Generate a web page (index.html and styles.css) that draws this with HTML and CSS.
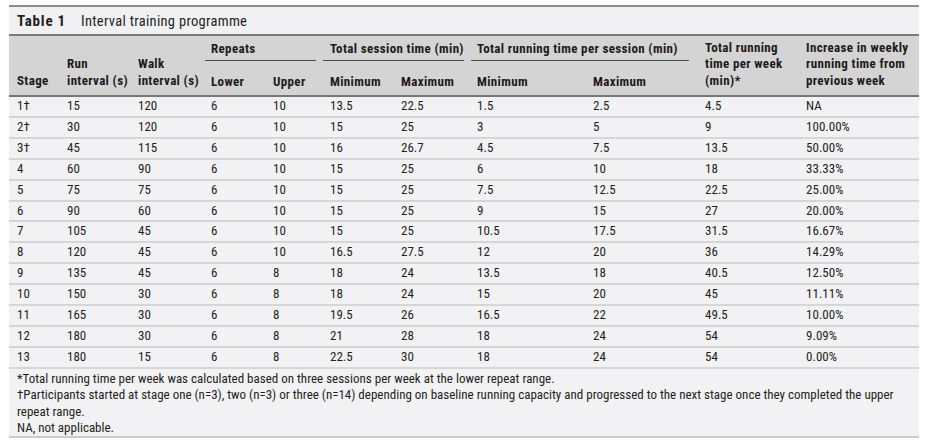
FILE: index.html
```html
<!DOCTYPE html>
<html>
<head>
<meta charset="utf-8">
<link rel="stylesheet" href="styles.css">
</head>
<body>
<div class="tbl">
  <div class="caption"><span class="cap-num">Table 1</span><span class="cap-text">Interval training programme</span></div>
  <table class="data">
    <colgroup>
      <col class="c-stage"><col class="c-run"><col class="c-walk"><col class="c-lower"><col class="c-upper">
      <col class="c-smin"><col class="c-smax"><col class="c-rmin"><col class="c-rmax"><col class="c-week"><col class="c-inc">
    </colgroup>
    <thead>
      <tr class="h1">
        <th rowspan="2" class="rs">Stage</th>
        <th rowspan="2" class="rs">Run<br>interval (s)</th>
        <th rowspan="2" class="rs">Walk<br>interval (s)</th>
        <th colspan="2" class="grp"><div class="gl g-rep">Repeats</div></th>
        <th colspan="2" class="grp"><div class="gl g-ses">Total session time (min)</div></th>
        <th colspan="2" class="grp"><div class="gl g-run">Total running time per session (min)</div></th>
        <th rowspan="2" class="rs">Total running<br>time per week<br>(min)*</th>
        <th rowspan="2" class="rs">Increase in weekly<br>running time from<br>previous week</th>
      </tr>
      <tr class="h2">
        <th>Lower</th><th>Upper</th><th>Minimum</th><th>Maximum</th><th>Minimum</th><th>Maximum</th>
      </tr>
    </thead>
    <tbody>
      <tr><td>1†</td><td>15</td><td>120</td><td>6</td><td>10</td><td>13.5</td><td>22.5</td><td>1.5</td><td>2.5</td><td>4.5</td><td>NA</td></tr>
      <tr><td>2†</td><td>30</td><td>120</td><td>6</td><td>10</td><td>15</td><td>25</td><td>3</td><td>5</td><td>9</td><td>100.00%</td></tr>
      <tr><td>3†</td><td>45</td><td>115</td><td>6</td><td>10</td><td>16</td><td>26.7</td><td>4.5</td><td>7.5</td><td>13.5</td><td>50.00%</td></tr>
      <tr><td>4</td><td>60</td><td>90</td><td>6</td><td>10</td><td>15</td><td>25</td><td>6</td><td>10</td><td>18</td><td>33.33%</td></tr>
      <tr><td>5</td><td>75</td><td>75</td><td>6</td><td>10</td><td>15</td><td>25</td><td>7.5</td><td>12.5</td><td>22.5</td><td>25.00%</td></tr>
      <tr><td>6</td><td>90</td><td>60</td><td>6</td><td>10</td><td>15</td><td>25</td><td>9</td><td>15</td><td>27</td><td>20.00%</td></tr>
      <tr><td>7</td><td>105</td><td>45</td><td>6</td><td>10</td><td>15</td><td>25</td><td>10.5</td><td>17.5</td><td>31.5</td><td>16.67%</td></tr>
      <tr><td>8</td><td>120</td><td>45</td><td>6</td><td>10</td><td>16.5</td><td>27.5</td><td>12</td><td>20</td><td>36</td><td>14.29%</td></tr>
      <tr><td>9</td><td>135</td><td>45</td><td>6</td><td>8</td><td>18</td><td>24</td><td>13.5</td><td>18</td><td>40.5</td><td>12.50%</td></tr>
      <tr><td>10</td><td>150</td><td>30</td><td>6</td><td>8</td><td>18</td><td>24</td><td>15</td><td>20</td><td>45</td><td>11.11%</td></tr>
      <tr><td>11</td><td>165</td><td>30</td><td>6</td><td>8</td><td>19.5</td><td>26</td><td>16.5</td><td>22</td><td>49.5</td><td>10.00%</td></tr>
      <tr><td>12</td><td>180</td><td>30</td><td>6</td><td>8</td><td>21</td><td>28</td><td>18</td><td>24</td><td>54</td><td>9.09%</td></tr>
      <tr><td>13</td><td>180</td><td>15</td><td>6</td><td>8</td><td>22.5</td><td>30</td><td>18</td><td>24</td><td>54</td><td>0.00%</td></tr>
    </tbody>
  </table>
  <div class="notes">
    <p>*Total running time per week was calculated based on three sessions per week at the lower repeat range.</p>
    <p>†Participants started at stage one (n=3), two (n=3) or three (n=14) depending on baseline running capacity and progressed to the next stage once they completed the upper repeat range.</p>
    <p>NA, not applicable.</p>
  </div>
</div>
</body>
</html>
```
FILE: styles.css
```css
html, body {
  margin: 0;
  padding: 0;
  background: #ffffff;
}

body {
  font-family: "Roboto Condensed", "Open Sans", sans-serif;
  font-size: 13px;
  color: #231f20;
}

.tbl {
  width: 910px;
  margin: 5px 0 0 9px;
  border-top: 2px solid #8c8c8c;
}

.caption {
  height: 27px;
  line-height: 28px;
  padding: 0 8px;
  background: #f1f1f3;
  font-size: 14.5px;
  letter-spacing: 0.3px;
  white-space: nowrap;
}

.cap-num {
  font-weight: 700;
  font-size: 15px;
  letter-spacing: 0.8px;
  margin-right: 15px;
}

.data {
  width: 910px;
  border-collapse: collapse;
  table-layout: fixed;
}

.c-stage { width: 50px; }
.c-run { width: 71px; }
.c-walk { width: 73px; }
.c-lower { width: 62px; }
.c-upper { width: 57px; }
.c-smin { width: 71px; }
.c-smax { width: 76px; }
.c-rmin { width: 116px; }
.c-rmax { width: 112px; }
.c-week { width: 101px; }
.c-inc { width: 121px; }

.data thead {
  background: #d4d4d4;
  border-top: 2px solid #7c7c7c;
  border-bottom: 2px solid #767676;
  color: #1e1b1c;
}

.data th {
  text-align: left;
  font-weight: 700;
  line-height: 16.5px;
  padding: 0 0 5px 8px;
  vertical-align: bottom;
  white-space: nowrap;
  letter-spacing: 0.35px;
}

.data th.rs {
  padding-bottom: 6px;
}

.data .h1 {
  height: 26px;
}

.data .h2 {
  height: 35px;
}

.data th.grp {
  padding: 0;
}

.gl {
  margin: 0 6px 0 2px;
  padding: 0 0 3px 6px;
  line-height: 16px;
  border-bottom: 1px solid #4a4a4a;
}

.g-ses {
  margin: 0 5px 0 1px;
  padding-left: 7px;
}

.g-run {
  margin: 0 8px 0 2px;
}

.data tbody {
  background: #f2f2f4;
}

.data td {
  height: 18.9px;
  line-height: 18.9px;
  padding: 0 0 0 8px;
  border-bottom: 2px solid #d6d6d8;
  white-space: nowrap;
}

.notes {
  background: #f2f2f4;
  padding: 2px 8px 0;
  border-bottom: 2px solid #cbcbcd;
  line-height: 16.4px;
}

.notes p {
  margin: 0;
}
```
